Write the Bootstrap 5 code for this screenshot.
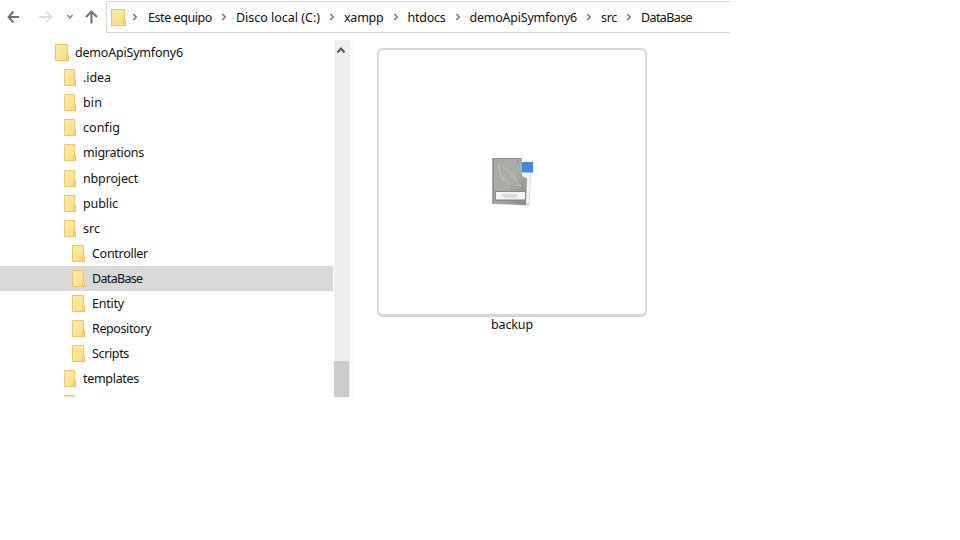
<!DOCTYPE html>
<html lang="es">
<head>
<meta charset="utf-8">
<meta name="viewport" content="width=device-width, initial-scale=1">
<title>DataBase</title>
<link href="https://cdn.jsdelivr.net/npm/bootstrap@5.3.0/dist/css/bootstrap.min.css" rel="stylesheet">
<style>
body{font-family:"Noto Sans","Open Sans",sans-serif;font-size:12.5px;line-height:18px;color:#111;background:#fff;overflow:hidden}
svg{display:block;flex:none}
.explorer{width:730px;height:397px}
.topbar{height:40px}
.nav-tools{width:106px;height:34px}
.address{height:32px;margin-top:1px;border:1px solid #d9d9d9;border-right:0;padding-left:4px}
.sep{width:24px;flex:none}
.sep-first{width:22px;padding-right:5px}
.fit{display:block;white-space:nowrap;flex:none}
.address .fit{padding-top:1px}
.tree{width:333px;height:357px}
.node{height:25.1px;flex:none}
.node svg{margin-right:6px}
.node .fit{padding-top:1px}
.lvl0{padding-left:55px}
.lvl0 .fit{padding-top:0}
.lvl1{padding-left:64px}
.lvl2{padding-left:72px}
.lvl1 svg,.lvl2 svg{margin-right:7px}
.chosen{background:#d9d9d9}
.scroll{width:16px;margin-left:1px;background:#eee}
.thumb{height:36px;width:15px;background:#cbcbcb}
.divider{width:3px;border-right:1px solid #f5f5f5}
.files{padding:8px 0 0 24px}
.preview{width:270px;height:269px;border:2px solid #d8d8d8;border-bottom-width:3px;border-radius:6px}
.caption{width:270px;line-height:16px}
</style>
<script src="https://cdn.jsdelivr.net/npm/bootstrap@5.3.0/dist/js/bootstrap.bundle.min.js" defer></script>
</head>
<body>
<svg width="0" height="0" class="position-absolute">
<defs>
<linearGradient id="paper" x1="0" y1="0" x2="1" y2="1"><stop offset="0" stop-color="#ffecab"/><stop offset="1" stop-color="#fbdd79"/></linearGradient>
<linearGradient id="cover" x1="0" y1="0" x2="1" y2="1"><stop offset="0" stop-color="#a6aaa3"/><stop offset=".5" stop-color="#abaea8"/><stop offset="1" stop-color="#858883"/></linearGradient>
<symbol id="folder" viewBox="0 0 14 17" preserveAspectRatio="none"><path d="M.5.5h12v11.500h1v4.500H.5z" fill="url(#paper)" stroke="#e8c65f"/><path d="M11.500 16.500V11.500q0-1 1-1h0q1 0 1 1v5z" fill="#ffe590" stroke="#e3bb48" stroke-width=".8"/></symbol>
<symbol id="chev" viewBox="0 0 6 8"><path d="M1.300 1l2.900 3-2.900 3" fill="none" stroke="#777" stroke-width="1.500"/></symbol>
</defs>
</svg>
<main class="explorer d-flex flex-column overflow-hidden">
<header class="topbar d-flex">
<div class="nav-tools flex-shrink-0">
<svg width="106" height="34" fill="none" stroke-width="1.900">
<path d="M19 17H9M13.500 11.500L8.500 17l5 5.500" stroke="#6c6c6c"/>
<path d="M39 17h12M46 11.500l5.500 5.500-5.500 5.500" stroke="#dedede"/>
<path d="M67.500 15l2.500 3 2.500-3" stroke="#8b8b8b" stroke-width="1.500"/>
<path d="M91.500 23.500V12M86 17l5.500-5.500L97 17" stroke="#777" stroke-width="2.200"/>
</svg>
</div>
<nav class="address d-flex align-items-center flex-grow-1" aria-label="Ruta">
<svg width="15" height="17"><use href="#folder"/></svg>
<span class="sep sep-first d-flex justify-content-center"><svg width="6" height="8"><use href="#chev"/></svg></span>
<span class="fit" data-w="64">Este equipo</span>
<span class="sep d-flex justify-content-center"><svg width="6" height="8"><use href="#chev"/></svg></span>
<span class="fit" data-w="84">Disco local (C:)</span>
<span class="sep d-flex justify-content-center"><svg width="6" height="8"><use href="#chev"/></svg></span>
<span class="fit" data-w="39.500">xampp</span>
<span class="sep d-flex justify-content-center"><svg width="6" height="8"><use href="#chev"/></svg></span>
<span class="fit" data-w="38">htdocs</span>
<span class="sep d-flex justify-content-center"><svg width="6" height="8"><use href="#chev"/></svg></span>
<span class="fit" data-w="107.500">demoApiSymfony6</span>
<span class="sep d-flex justify-content-center"><svg width="6" height="8"><use href="#chev"/></svg></span>
<span class="fit" data-w="16">src</span>
<span class="sep d-flex justify-content-center"><svg width="6" height="8"><use href="#chev"/></svg></span>
<span class="fit" data-w="51">DataBase</span>
</nav>
</header>
<div class="d-flex flex-grow-1">
<aside class="tree d-flex flex-column overflow-hidden">
<div class="node lvl0 d-flex align-items-center"><svg width="14" height="17"><use href="#folder"/></svg><span class="fit" data-w="108">demoApiSymfony6</span></div>
<div class="node lvl1 d-flex align-items-center"><svg width="12" height="17"><use href="#folder"/></svg><span class="fit" data-w="28">.idea</span></div>
<div class="node lvl1 d-flex align-items-center"><svg width="12" height="17"><use href="#folder"/></svg><span class="fit" data-w="19">bin</span></div>
<div class="node lvl1 d-flex align-items-center"><svg width="12" height="17"><use href="#folder"/></svg><span class="fit" data-w="37">config</span></div>
<div class="node lvl1 d-flex align-items-center"><svg width="12" height="17"><use href="#folder"/></svg><span class="fit" data-w="61">migrations</span></div>
<div class="node lvl1 d-flex align-items-center"><svg width="12" height="17"><use href="#folder"/></svg><span class="fit" data-w="55">nbproject</span></div>
<div class="node lvl1 d-flex align-items-center"><svg width="12" height="17"><use href="#folder"/></svg><span class="fit" data-w="35">public</span></div>
<div class="node lvl1 d-flex align-items-center"><svg width="12" height="17"><use href="#folder"/></svg><span class="fit" data-w="17">src</span></div>
<div class="node lvl2 d-flex align-items-center"><svg width="13" height="17"><use href="#folder"/></svg><span class="fit" data-w="56">Controller</span></div>
<div class="node lvl2 chosen d-flex align-items-center"><svg width="13" height="17"><use href="#folder"/></svg><span class="fit" data-w="50.500">DataBase</span></div>
<div class="node lvl2 d-flex align-items-center"><svg width="13" height="17"><use href="#folder"/></svg><span class="fit" data-w="32">Entity</span></div>
<div class="node lvl2 d-flex align-items-center"><svg width="13" height="17"><use href="#folder"/></svg><span class="fit" data-w="59">Repository</span></div>
<div class="node lvl2 d-flex align-items-center"><svg width="13" height="17"><use href="#folder"/></svg><span class="fit" data-w="37">Scripts</span></div>
<div class="node lvl1 d-flex align-items-center"><svg width="12" height="17"><use href="#folder"/></svg><span class="fit" data-w="56">templates</span></div>
<div class="node lvl1 d-flex align-items-center"><svg width="12" height="17"><use href="#folder"/></svg></div>
</aside>
<div class="scroll d-flex flex-column justify-content-between">
<svg width="16" height="20" fill="none"><path d="M3.500 12.500l3.500-4 3.500 4" stroke="#555" stroke-width="2"/></svg>
<div class="thumb"></div>
</div>
<div class="divider"></div>
<section class="files">
<div class="preview d-flex align-items-center justify-content-center">
<svg width="44" height="50" viewBox="0 0 44 50">
<path d="M28 8l14 2-3 39-14-1z" fill="#d9dad8"/>
<path d="M28 8h13l-2 38-12 2z" fill="#f3f4f3" stroke="#ddd" stroke-width=".6"/>
<path d="M31 5h12v10.500H32z" fill="#4389e6"/>
<path d="M3 1h29v17q1 3 5 3l-1 27-33-1z" fill="url(#cover)"/>
<path d="M3 1v46" stroke="#797c77" stroke-width="1.300"/>
<path d="M3.500 1.500H31" stroke="#8e918b"/>
<path d="M27 4h2M27 6h2" stroke="#858883" stroke-width=".8"/>
<path d="M8 9c5-1 8 3 11 6 4 4 7 7 7 10l5 4-6-1M8 9c2 4 2 8 3 12l2 3 1-4 4 6 2 3" fill="none" stroke="#c5c8c1" stroke-width=".8"/>
<path d="M5 34h31v10H5z" fill="#858883"/>
<path d="M6 35h29v7.500H6z" fill="#f4f4f3"/>
<path d="M12 38h15M14 40h12" stroke="#b5b7b4" stroke-width="1.100" stroke-dasharray="2 .6"/>
</svg>
</div>
<div class="caption d-flex justify-content-center"><span class="fit" data-w="42">backup</span></div>
</section>
</div>
</main>
<script>
// Spread each label's letters so it fills its own column width.
document.querySelectorAll('.fit').forEach(function (el) {
  var w = Number(el.dataset.w);
  var natural = el.getBoundingClientRect().width;
  el.style.letterSpacing = ((w - natural) / el.textContent.length) + 'px';
  el.style.width = w + 'px';
});
</script>
</body>
</html>
